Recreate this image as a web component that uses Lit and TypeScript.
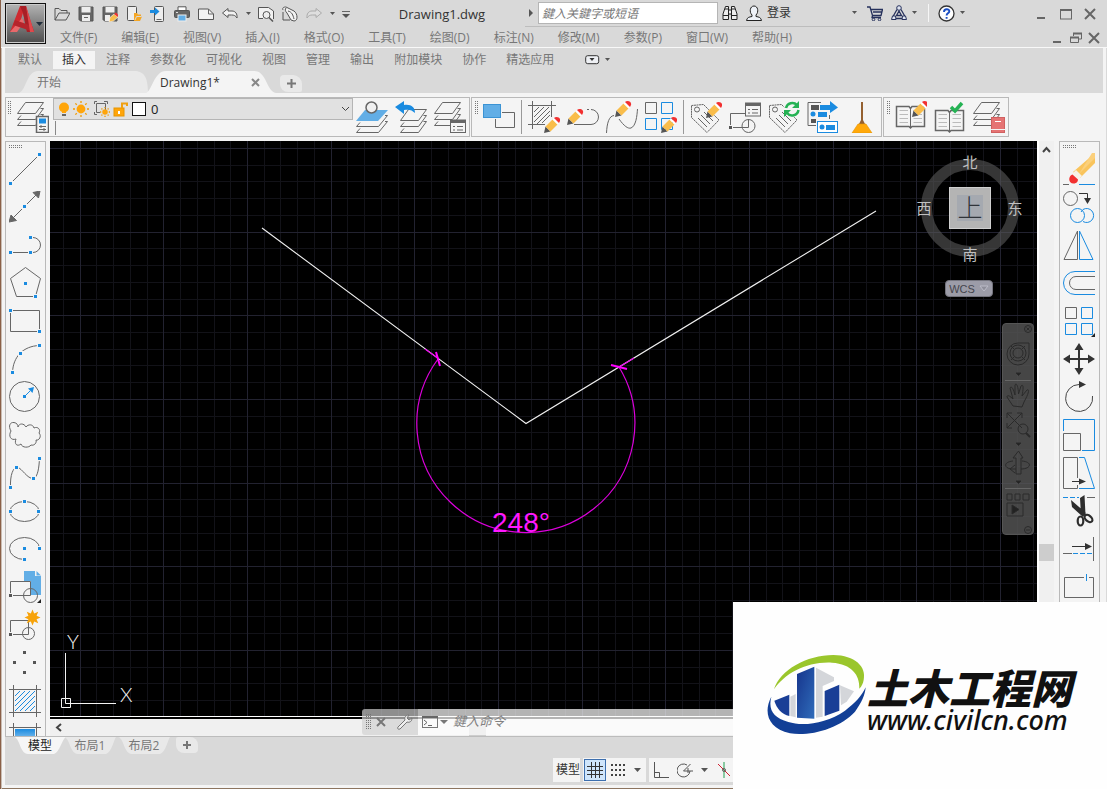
import { LitElement, html, svg, css } from "lit";
import { customElement, state } from "lit/decorators.js";
import { classMap } from "lit/directives/class-map.js";

const G = "#666";
const B = "#1a8be0";

const icon = (body: unknown, w = 32, h = 32) =>
  html`<svg class="ico" width=${w} height=${h} viewBox="0 0 ${w} ${h}" fill="none" stroke=${G} aria-hidden="true">${body}</svg>`;

/* Blue grip square centred on x, y */
const grip = (x: number, y: number, c = B) =>
  svg`<rect x=${x - 2.5} y=${y - 2.5} width="5" height="5" fill="#f4f4f4" stroke="none"/><rect x=${x - 1.5} y=${y - 1.5} width="3" height="3" fill=${c} stroke="none"/>`;

const caret = html`<svg class="ico" width="7" height="4" viewBox="0 0 7 4" aria-hidden="true"><path d="M1 0H6L3.5 3Z" fill="#555"/></svg>`;

const dots = (cols: number, rows: number) => html`<svg class="ico" width=${cols * 2} height=${rows * 2} aria-hidden="true">
  ${Array.from({ length: cols * rows }, (_, i) => svg`<rect x=${(i % cols) * 2} y=${Math.floor(i / cols) * 2} width="1" height="1" fill="#777"/>`)}
</svg>`;

/* Pencil with its tip at x, y, pointing down-left */
const pencil = (x: number, y: number) => svg`<g transform="translate(${x} ${y})" stroke="none">
  <path d="M0 0L1.5-6.5L6.5-1.5Z" fill="#555"/>
  <path d="M1.5-6.5L8.500-13.5L13.5-8.500L6.500-1.5Z" fill="#f9bd4b"/>
  <path d="M8.500-13.5L10-15L15-10L13.5-8.500Z" fill="#fff"/>
  <path d="M10-15C12-17 17-16 16-12L15-10Z" fill="#f23030"/>
</g>`;

/* Stack of three sheets */
const sheets = (top = "none") => svg`
  <path d="M8.500 1.5H26.500L18.500 12.500H.5Z" fill=${top} stroke=${G}/>
  <path d="M23.500 7.500H26.500L18.500 18.500H.5L4 14.500M23.500 13.500H26.500L18.500 24.500H.5L4 20.500"/>`;

const tag = svg`<path d="M1.500 4.500L13.500 3.500L29 19L17 31.500L1.500 16.500Z" stroke-dasharray="2 .5"/><circle cx="7" cy="8.500" r="2.500"/>
  <path d="M8 17L17 26M11 14L20 23M14 11L23 20" />`;

const book = svg`<path d="M1.500 7.500H14L15.500 9.500L17 7.500H29.500V27.500H17L15.500 29L14 27.500H1.500Z" stroke-width="1.500"/><path d="M15.500 9V28"/>
  <path d="M4.500 11.500H13M4.500 15.500H13M4.500 19.500H13M4.500 23.500H13M18.500 11.500H27M18.500 15.500H27M18.500 19.500H27M18.500 23.500H27" stroke="#bbb"/>`;

const star = (cx: number, cy: number, r: number) => {
  const pts = Array.from({ length: 16 }, (_, i) => {
    const q = i % 2 ? r * 0.55 : r;
    const a = (i * Math.PI) / 8;
    return `${(cx + q * Math.sin(a)).toFixed(1)},${(cy - q * Math.cos(a)).toFixed(1)}`;
  }).join(" ");
  return svg`<polygon points=${pts} fill="#f7a30a" stroke="none"/>`;
};

const sun = (cx: number, cy: number, r: number) => svg`<circle cx=${cx} cy=${cy} r=${r * 0.55} fill="#ffa50a" stroke="none"/>
  ${[0, 1, 2, 3, 4, 5, 6, 7].map((i) => {
    const a = (i * Math.PI) / 4;
    return svg`<line x1=${cx + r * 0.75 * Math.cos(a)} y1=${cy + r * 0.75 * Math.sin(a)} x2=${cx + r * Math.cos(a)} y2=${cy + r * Math.sin(a)} stroke="#f09a00" stroke-width="1.300"/>`;
  })}`;

const corner = svg`<path d="M32 28V32H28Z" fill="#222" stroke="none"/>`;

const quick: [string, unknown][] = [
  ["打开", svg`<path d="M1 14V2.500H5L7 4.500H13V7M1 14L5 7H16L12 14Z" stroke="#555"/>`],
  ["保存", svg`<path d="M1 1H15V15H2.500L1 13.500Z" fill="#666" stroke="#555"/><rect x="3.500" y="1" width="9" height="5.500" fill="#eee" stroke="none"/><rect x="4" y="9" width="8" height="6" fill="#eee" stroke="none"/><path d="M6 11.500H10" />`],
  ["另存为", svg`<path d="M1 1H15V15H2.500L1 13.500Z" fill="#666" stroke="#555"/><rect x="3.500" y="1" width="9" height="5.500" fill="#eee" stroke="none"/><rect x="3" y="9" width="5" height="6" fill="#eee" stroke="none"/><path d="M7 16L8 11.500L12 8L16 11L11.500 15Z" fill="#f9bd4b" stroke="#fff" stroke-width=".6"/><path d="M12 8L14 6.500L16.500 9L16 11Z" fill="#e33" stroke="none"/>`],
  ["从移动设备打开", svg`<rect x="1.500" y=".5" width="9" height="14" rx="1" fill="#eee" stroke="#555"/><path d="M8 15V7H11L12 8.500H15V10.500L16 10.500L14 15Z" fill="#f5a623" stroke="none"/><path d="M9 14L10.500 10.500H15.500" stroke="#d9d9d9"/>`],
  ["保存到移动设备", svg`<rect x="4.500" y=".5" width="9" height="15" rx="1" fill="#eee" stroke="#555"/><path d="M6.500 13.500H11.500" /><path d="M0 4H5V1.500L9.500 5.500L5 9.500V7H0Z" fill="#1a8be0" stroke="none"/>`],
  ["打印", svg`<path d="M4 4V.8H12V4" fill="#fff" stroke="#555"/><rect x=".5" y="4.500" width="15" height="7" rx="1" fill="#666" stroke="#555"/><rect x="4" y="9" width="8" height="6" fill="#62aee6" stroke="#eee"/><path d="M2 6.500H4" stroke="#ddd"/>`],
  ["新建", svg`<path d="M.5 3H10.500L15.500 8V13.500H.5Z" fill="#f2f2f2" stroke="#555"/><path d="M10.500 3V8H15.500"/>`],
  ["放弃", svg`<path d="M.5 7L6 2.500V5H10C13.500 5 15.500 8 15 12C13.500 9.500 12 9 9.500 9H6V11.500Z" fill="#f2f2f2" stroke="#555"/>`],
];

const quick2: [string, unknown][] = [
  ["打印预览", svg`<path d="M5 12.500H.5V1.500H10.500L15.500 5V13" fill="#f2f2f2" stroke="#555"/><circle cx="8.500" cy="9" r="3.500" fill="#eee" stroke="#555"/><path d="M11 11.500L15 15.500" stroke="#555" stroke-width="1.500"/>`],
  ["图纸集", svg`<path d="M1 4C0 1.500 2 1 4 1L12 5C16 8 16 15 12 15L9 14L5 7C3 5 3 3.500 4 2" fill="#f2f2f2" stroke="#555"/><path d="M1 6V14H8M6 5C10 6 11 9 12 13" stroke="#555"/>`],
  ["重做", svg`<path d="M15.500 7L10 2.500V5H6C2.500 5 .5 8 1 12C2.500 9.500 4 9 6.500 9H10V11.500Z" fill="#dedede" stroke="#aaa"/>`],
];

const draw: [string, unknown][] = [
  ["直线", svg`<path d="M3 29L29 3"/>${grip(1.5, 30.5)}${grip(30.5, 1.5)}`],
  ["构造线", svg`<path d="M4 27L27 4"/><path d="M0 31L2 24L7.500 29.500ZM31 0L24 1.500L29.500 7Z" fill="#666"/>${grip(15.5, 15.5)}`],
  ["多段线", svg`<path d="M1.500 23.500H21.500M21.500 8.500H24A7.500 7.500 0 0 1 24 23.500H21.500"/>${grip(1.5, 23.5)}${grip(21.5, 23.5)}${grip(21.5, 8.5)}`],
  ["多边形", svg`<path d="M16.500.5L31.500 11.500L26.500 29.500H7.500L1.500 11.500Z"/>${grip(16.5, 16.5)}${grip(26.5, 29.5)}`],
  ["矩形", svg`<path d="M1.500 5.500H30.500V26.500H1.500Z"/>${grip(1.5, 5.5)}${grip(30.5, 26.5)}`],
  ["圆弧", svg`<path d="M3.500 29.500C4 14 14 3 30.500 2.500"/>${grip(3.5, 29.5)}${grip(11.5, 10.5)}${grip(30.5, 2.5)}`],
  ["圆", svg`<circle cx="15.500" cy="15.500" r="15"/>${grip(15.5, 15.5)}<path d="M17 14L21 10" stroke=${B}/><path d="M25 6L23.500 12L19 7.500Z" fill=${B} stroke="none"/>`],
  ["修订云线", svg`<path d="M2 12C-1 7 1 3 5 3.500C8 4 9 6 9 8C10 4 15 4 17 8C19 5 24 5 25 9C29 7 32 11 30 14C33 17 30 22 27 21C28 24 25 27 22 26C20 29 13 29 12 25C8 28 5 25 7 20C2 22-1 17 2 12"/>`],
  ["样条曲线", svg`<path d="M1.500 30.500C1 18 4 10 8.500 10.500C13 11 18 22 24.500 21.500C29 20 30 10 30.500 1.500"/>${grip(1.5, 30.5)}${grip(7.5, 10.5)}${grip(24.5, 21.5)}${grip(30.5, 1.5)}`],
  ["椭圆", svg`<ellipse cx="15.500" cy="16.500" rx="14.500" ry="10"/>${grip(1.5, 16.5)}${grip(15.5, 6.5)}${grip(29.5, 16.5)}`],
  ["椭圆弧", svg`<path d="M30.500 15.500A15 11 0 1 0 15.500 26.500"/>${grip(30.5, 15.5)}${grip(15.5, 15.5)}${grip(15.5, 26.5)}`],
  ["插入块", svg`<path d="M15 0H26V5H32V24H22V10H15Z" fill="#62aee6" stroke="none"/><path d="M27.500 0L32 4.500H27.500Z" fill="#62aee6" stroke="none"/><path d="M1.500 10.500H21.500V24.500H1.500Z"/><circle cx="21.500" cy="24.500" r="7"/>${grip(1.5, 24.5, "#555")}${corner}`],
  ["创建块", svg`<path d="M1.500 11.500H19.500V25.500H1.500Z"/><circle cx="19.500" cy="24.500" r="6"/>${grip(1.5, 25.5, "#555")}${star(23.5, 8.5, 8)}`],
  ["点", svg`${grip(15.5, 5.5, "#555")}${grip(5.5, 15.5, "#555")}${grip(25.5, 15.5, "#555")}${grip(15.5, 25.5, "#555")}`],
  ["图案填充", svg`<path d="M0 4.500H32M0 27.500H32M4.500 0V32M27.500 0V32"/><path d="M6 11L11 6M6 16L16 6M6 21L21 6M6 26L26 6M11 26L26 11M16 26L26 16M21 26L26 21" stroke=${B}/>`],
  ["渐变色", svg`<defs><linearGradient id="gr" x1="0" y1="0" x2="0" y2="1"><stop offset="0" stop-color="#1a8be0"/><stop offset="1" stop-color="#e8f3fb"/></linearGradient></defs><rect x="6" y="6" width="20" height="20" fill="url(#gr)" stroke="none"/><path d="M0 4.500H32M4.500 0V32M27.500 0V32"/>`],
];

const modify: [string, unknown][] = [
  ["删除", svg`<path d="M32 0V10L17 25L10 19Z" fill="#f9c45c" stroke="none"/><path d="M29 0H32V5L16 21Z" fill="#fbd07c" stroke="none"/><path d="M13 17L10 20L15 27L19 23Z" fill="#f7f1e6" stroke="none"/><path d="M9.500 21.500C5 23 5 30.500 10.500 30.500C14 30.500 15 28 15 26.500Z" fill="#f23030" stroke="none"/><path d="M0 31.500H6"/><path d="M16 31.500H32" stroke=${B}/>`],
  ["复制", svg`<circle cx="7.500" cy="7.500" r="7"/><path d="M16 2.500H24.500V8" stroke="#333"/><path d="M21 7H28L24.500 13Z" fill="#333" stroke="none"/><g stroke=${B}><circle cx="14.500" cy="24.500" r="7"/><path d="M20 18.500A7 7 0 1 1 20 30.500M20 18.500L18 21"/></g>`],
  ["镜像", svg`<path d="M14.500 2V30.500H1Z"/><path d="M16.500 2V30.500H30Z" stroke=${B}/>`],
  ["偏移", svg`<path d="M32 4.500H12A11.500 11.500 0 0 0 12 27.500H32" stroke=${B}/><path d="M32 9.500H13A6.500 6.500 0 0 0 13 22.500H32"/>`],
  ["阵列", svg`<path d="M2.500 2.500H13.500V13.500H2.500Z"/><path d="M18.500 2.500H29.500V13.500H18.500ZM2.500 18.500H13.500V29.500H2.500ZM18.500 18.500H29.500V29.500H18.500Z" stroke=${B}/>${corner}`],
  ["移动", svg`<path d="M16 4V28M4 16H28" stroke="#333" stroke-width="2"/><path d="M16 0L20.500 7H11.500ZM16 32L20.500 25H11.500ZM0 16L7 11.500V20.500ZM32 16L25 11.500V20.500Z" fill="#333" stroke="none"/>`],
  ["旋转", svg`<path d="M29.500 15A13.500 13.500 0 1 1 16 3.500" stroke="#444"/><path d="M16 0L23 3.500L16 7Z" fill="#333" stroke="none"/>`],
  ["缩放", svg`<path d="M.5 12V.5H31.500V31.500H19" stroke=${B}/><path d="M.5 14.500H17.500V31.500H.5Z"/>`],
  ["拉伸", svg`<path d="M14.500 21V.5H.5V31.500H14.500V28"/><path d="M16 .5H21.500L31.500 31.500H16" stroke=${B}/><path d="M9 24.500H18" stroke="#333"/><path d="M16 21.500L23 24.500L16 27.500Z" fill="#333" stroke="none"/>`],
  ["修剪", svg`<path d="M0 2.500H16" stroke=${B} stroke-dasharray="5 2"/><path d="M24 2.500H32"/><path d="M17 3L21.500 0L22.500 20L18 20ZM8 5L23 18L20 22L9 12Z" fill="#2d2d2d" stroke="none"/><ellipse cx="17.500" cy="26" rx="2.800" ry="4.500" stroke="#2d2d2d" stroke-width="2.200"/><ellipse cx="25.500" cy="23.500" rx="2.800" ry="4.500" transform="rotate(-50 25.500 23.500)" stroke="#2d2d2d" stroke-width="2.200"/>`],
  ["延伸", svg`<path d="M9 13.500H24" stroke="#333"/><path d="M22 10L29 13.500L22 17Z" fill="#333" stroke="none"/><path d="M30.500 4V28M0 20.500H9"/><path d="M10 20.500H29" stroke=${B} stroke-dasharray="5 2"/>`],
  ["打断于点", svg`<path d="M21 6.500H1.500V26.500H30.500V6.500H26"/><path d="M23.500 3V10" stroke=${B}/>`],
];

const bar1: [string, unknown][] = [
  ["将对象的图层设为当前", svg`<path d="M9 9H32L22 20H0Z" fill="#62aee6" stroke="none"/><path d="M29 14.500H31.500L22.500 25.500H.5L4 21.500M29 20.500H31.500L22.500 31.500H.5L4 27.500"/><circle cx="15.500" cy="6.500" r="5.500" fill="#f0f0f0" stroke-width="1.500"/>`],
  ["上一个图层", svg`<g transform="translate(5 8)"><path d="M8.500.5H26.500L18.500 11.500H.5Z"/><path d="M23.500 6.500H26.500L18.500 17.500H.5L4 13.500M23.500 12.500H26.500L18.500 23.500H.5L4 19.500"/></g><path d="M0 6L9 0V4C16 3 20 6 20 12C17 9 14 8 9 9V13Z" fill=${B} stroke="none"/>`],
  ["图层状态管理器", svg`${sheets()}<rect x="16.500" y="19" width="15" height="12.500" fill="#f4f4f4"/><path d="M16 20.500H32" stroke-width="3"/><path d="M19 25.500H21M19 29H21M23 25.500H29M23 29H29"/>`],
];

const bar2: ([string, unknown] | null)[] = [
  ["插入", svg`<path d="M12.500 18V26.500H31.500V11.500H19"/><rect x=".5" y="3.500" width="17" height="13" fill="#62aee6" stroke="#3b93d4"/>`],
  null,
  ["编辑图案填充", svg`<path d="M0 4.500H28M0 23.500H17M4.500 0V28M23.500 0V16"/><path d="M6 11L11 6M6 16L16 6M6 21L21 6M9 23L22 10M14 22L22 14"/>${pencil(16, 32)}`],
  ["编辑多段线", svg`<path d="M7 23.500H24A7.500 7.500 0 0 0 24 8.500M20 8.500H22"/>${pencil(0, 24)}`],
  ["编辑样条曲线", svg`<path d="M.5 32C1 22 3 15 8 14.500M13 18C18 25 22 28 25 27C30 25 31 15 31.500 8"/>${pencil(9, 16)}`],
  ["编辑阵列", svg`<path d="M.5 1.500H11.500V12.500H.5Z"/><path d="M16.500 1.500H27.500V12.500H16.500ZM.5 17.500H11.500V28.500H.5ZM16.500 17.500H27.500V28.500H16.500Z" stroke=${B}/>${pencil(16, 32)}`],
  null,
  ["编辑属性", svg`${tag}${pencil(16, 17)}`],
  ["块属性管理器", svg`<path d="M17 12.500H1.500V26.500H19.500V18"/><circle cx="19.500" cy="25" r="6.500"/>${grip(1.5, 26.5, "#555")}<rect x="16.500" y="2" width="15" height="13" fill="#f4f4f4"/><path d="M16 3.500H32" stroke-width="3"/><path d="M19 8.500H21M19 12H21M23 8.500H29M23 12H29"/>`],
  ["同步属性", svg`${tag}<circle cx="24" cy="8" r="8" fill="#f4f4f4" stroke="none"/><path d="M18 7A6.500 6.500 0 0 1 29 4M30.500 9A6.500 6.500 0 0 1 19 12" stroke="#25b254" stroke-width="2.500"/><path d="M31 0V7H24ZM16 16V9H23Z" fill="#25b254" stroke="none"/>`],
  ["提取数据", svg`<path d="M14 1.500H1V24.500H9M22.500 14V18"/><rect x="4" y="4" width="8" height="5" fill="#555" stroke="none"/><rect x="4" y="18" width="5" height="4" fill="#555" stroke="none"/><circle cx="6" cy="13" r="2.500" fill=${B} stroke="none"/><rect x="11" y="11" width="9" height="5" fill=${B} stroke="none"/><path d="M13 4H23V0L31 6.500L23 12V9H13Z" fill=${B} stroke="none"/><rect x="10.500" y="20.500" width="20" height="11" fill="#fff" stroke=${B}/><circle cx="15" cy="26" r="2.500" fill=${B} stroke="none"/><rect x="19" y="24" width="9" height="5" fill=${B} stroke="none"/>`],
  ["清理", svg`<path d="M16 1V20" stroke="#946030" stroke-width="2"/><path d="M13 23L16 17L19 23Z" fill="#946030" stroke="none"/><path d="M12 23H20L26 32H6Z" fill="#ffa80a" stroke="#e59400" stroke-width=".6"/>`],
];

const bar3: [string, unknown][] = [
  ["编辑图纸集", svg`<g transform="translate(0 -2)">${book}</g>${pencil(17, 16)}`],
  ["检查标准", svg`<g transform="translate(0 2)">${book}</g><path d="M17 6L21 10L28 2" stroke="#25b254" stroke-width="3.500"/>`],
  ["图层转换器", svg`${sheets()}<rect x="18.500" y="16.500" width="13" height="15" fill="#e57373" stroke="#d06060"/><path d="M18 28.500H32" stroke="#f3f3f3"/><path d="M22 20.500H28" stroke="#fff"/>`],
];

const menus = ["文件(F)", "编辑(E)", "视图(V)", "插入(I)", "格式(O)", "工具(T)", "绘图(D)", "标注(N)", "修改(M)", "参数(P)", "窗口(W)", "帮助(H)"];
const ribbon = ["默认", "插入", "注释", "参数化", "可视化", "视图", "管理", "输出", "附加模块", "协作", "精选应用"];

const shared = css`
  :host { display: block; font: 12px/16px "Open Sans", "Noto Sans CJK SC", sans-serif; color: #666; }
  * { box-sizing: border-box; }
  button { font: inherit; color: inherit; background: none; border: 0; padding: 0; display: flex; align-items: center; justify-content: center; }
  .ico { display: block; flex: none; overflow: hidden; }
`;

@customElement("cad-header")
class CadHeader extends LitElement {
  static styles = [shared, css`
    .head { display: grid; grid-template-columns: 45px 1fr; background: #d9d9d9; border-bottom: 1px solid #f8f8f8; height: 48px; }
    .app { grid-row: 1 / 3; align-self: start; margin: 3px 0 0 4px; height: 41px; width: 41px; border: 1px solid #111; background: linear-gradient(#b4b4b4, #4c4c4c); box-shadow: inset 0 0 0 1px #ccc; }
    .top { display: flex; align-items: center; height: 27px; padding: 0 5px 0 4px; }
    .q { width: 24px; height: 24px; }
    .c { width: 12px; height: 24px; }
    .wide { width: 15px; }
    .title { flex: 1; text-align: center; font-size: 13px; line-height: 16px; color: #333; white-space: nowrap; margin-left: 6px; }
    .info { display: flex; align-items: center; width: 445px; height: 26px; border-bottom: 1px solid #bdbdbd; }
    .tri { margin: 0 6px 0 4px; }
    input { font: italic 12px/18px "Open Sans", "Noto Sans CJK SC", sans-serif; width: 180px; height: 22px; border: 1px solid #b5b5b5; background: #fff; padding: 0 3px; border-radius: 0; margin: 0 4px 0 -1px; }
    input::placeholder { color: #777; opacity: 1; }
    .login { color: #333; gap: 5px; margin-left: 8px; }
    .push { flex: 1; }
    .cart { margin: 0 4px 0 7px; }
    .sep { width: 1px; height: 18px; background: #f6f6f6; margin: 0 9px 0 10px; }
    .win { display: flex; margin-left: 60px; }
    .low { display: flex; align-items: center; justify-content: space-between; height: 20px; padding: 2px 4px 0 14px; }
    .menu { display: flex; gap: 24px; white-space: nowrap; color: #777; }
    .doc { display: flex; }
    .doc button { width: 18px; height: 18px; }
  `];
  render() {
    return html`<header class="head">
      <button class="app" aria-label="应用程序菜单">
        <svg class="ico" width="37" height="37" viewBox="0 0 37 37" aria-hidden="true">
          <path d="M3 27L13 1H19L27 27H20L16 8L10 27Z" fill="#cf2a30"/><path d="M13 1H19L24 27L20 27L16 8Z" fill="#a81f26"/>
          <path d="M3 27L15 13L17 17L10 27Z" fill="#e8696b"/><path d="M8 15L25 21L27 27L6 20Z" fill="#b5242b"/><path d="M19 1L27 27H23Z" fill="#e0484c"/>
          <path d="M29 17H36L32.500 21Z" fill="#222e3c"/>
        </svg>
      </button>
      <div class="top">
        ${quick.map(([n, b]) => html`<button class="q" aria-label=${n}>${icon(b, 16, 16)}</button>`)}
        <button class="c" aria-label="放弃列表">${caret}</button>
        ${quick2.map(([n, b]) => html`<button class="q" aria-label=${n}>${icon(b, 16, 16)}</button>`)}
        <button class="c" aria-label="重做列表">${caret}</button>
        <button class="wide" aria-label="自定义快速访问工具栏">${icon(svg`<path d="M1 1.500H9"/><path d="M1 4H9L5 8Z" fill="#555" stroke="none"/>`, 10, 8)}</button>
        <span class="title">Drawing1.dwg</span>
        <div class="info">
          <span class="tri">${icon(svg`<path d="M0 0L4 4L0 8Z" fill="#555" stroke="none"/>`, 4, 8)}</span>
          <input aria-label="搜索" placeholder="鍵入关鍵字或短语" />
          <button aria-label="查找">${icon(svg`<path d="M1 14.500V9L3.500 1.500H6.500V14.500ZM15 14.500V9L12.500 1.500H9.500V14.500ZM6.500 5H9.500V9H6.500M1 10.500H6.500M9.500 10.500H15M3 4H6.500M9.500 4H13" stroke="#222" fill="#eee"/>`, 16, 16)}</button>
          <button class="login">${icon(svg`<path d="M.5 15.500C1 12.500 3 12 6 11.500V10C3 7 4 1 8 1S13 7 10 10V11.500C13 12 15 12.500 15.500 15.500Z" stroke="#222" fill="#eef2f8"/>`, 16, 16)}登录</button>
          <span class="push"></span>
          <button class="c" aria-label="登录选项">${caret}</button>
          <button class="cart" aria-label="应用商店">${icon(svg`<path d="M0 2H3L5.500 10.500H14L15.500 4.500H4M5.500 10.500L5 12.500H14M6 7H15" stroke="#26315c" stroke-width="1.300"/><circle cx="6.500" cy="14.500" r="1.300" stroke="#26315c"/><circle cx="12.500" cy="14.500" r="1.300" stroke="#26315c"/>`, 16, 16)}</button>
          <button class="q" aria-label="保持连接">${icon(svg`<path d="M6 4.500L2 11.500M10 4.500L14 11.500M4 13.500H12M5.500 10.500L8 6L10.500 10.500Z" stroke="#26315c" stroke-width="1.300"/><circle cx="8" cy="3" r="2.300" fill="#dfe4f0" stroke="#26315c"/><path d="M1.500 11H4.500L5 14.500H.5ZM14.500 11H11.500L11 14.500H15.500Z" fill="#dfe4f0" stroke="#26315c"/>`, 16, 16)}</button>
          <button aria-label="连接选项">${caret}</button>
          <span class="sep"></span>
          <button aria-label="帮助"><svg class="ico" width="17" height="17" viewBox="0 0 17 17"><circle cx="8.500" cy="8.500" r="7.500" fill="#fff" stroke="#333" stroke-width="1.300"/><path d="M6 7C6 3.500 11.500 3.500 11.300 6.500C11 8.500 8.600 8.300 8.600 10.500M8.600 12V13.800" fill="none" stroke="#1c4fc4" stroke-width="1.900"/></svg></button>
          <button class="wide" aria-label="帮助选项">${caret}</button>
        </div>
        <div class="win">
          <button class="q" aria-label="最小化">${icon(svg`<path d="M3 12H11" stroke-width="2"/>`, 16, 16)}</button>
          <button class="q" aria-label="最大化">${icon(svg`<rect x="2.500" y="3.500" width="11" height="9.500"/><path d="M2 4H14" stroke-width="2"/>`, 16, 16)}</button>
          <button class="q" aria-label="关闭">${icon(svg`<path d="M3 3L13 13M13 3L3 13" stroke-width="2"/>`, 16, 16)}</button>
        </div>
      </div>
      <div class="low">
        <nav class="menu">${menus.map((m) => html`<button>${m}</button>`)}</nav>
        <div class="doc">
          <button aria-label="最小化图形">${icon(svg`<path d="M1 10H9" stroke-width="2"/>`, 12, 12)}</button>
          <button aria-label="还原图形">${icon(svg`<path d="M3.500 4V1.500H11.500V7H8.500" /><path d="M3 1.500H12M0 5.500H9" stroke-width="2"/><path d="M.5 5V10.500H8.500V5"/>`, 12, 12)}</button>
          <button aria-label="关闭图形">${icon(svg`<path d="M1 1L11 11M11 1L1 11" stroke-width="2"/>`, 12, 12)}</button>
        </div>
      </div>
    </header>`;
  }
}

@customElement("cad-ribbon")
class CadRibbon extends LitElement {
  @state() private active = "插入";
  static styles = [shared, css`
    .wrap { margin: 0 4px 0 5px; background: #d9d9d9; height: 45px; }
    .tabs { display: flex; align-items: center; gap: 2px; height: 23px; padding-left: 4px; }
    .tab { height: 18px; padding: 0 9px; color: #777; white-space: nowrap; }
    .tab.on { background: #f4f4f4; color: #333; }
    .more { margin-left: 20px; gap: 4px; }
    .files { display: flex; height: 22px; padding-left: 13px; }
    .file { height: 22px; width: 130px; background: #e9e9e9; color: #777; justify-content: flex-start; clip-path: path("M0 22C8 22 8 0 20 0H116C126 0 130 6 130 22Z"); padding: 1px 0 0 19px; }
    .file.on { background: #f4f4f4; color: #333; padding: 1px 16px 0 14px; justify-content: space-between; clip-path: path("M0 22C6 20 8 0 20 0H108C121 0 120 20 130 22Z"); margin-left: -2px; }
    .add { width: 22px; height: 17px; margin: 4px 0 0 4px; background: #e9e9e9; border-radius: 4px 9px 2px 8px; }
  `];
  render() {
    return html`<div class="wrap">
      <nav class="tabs">
        ${ribbon.map((t) => html`<button class=${classMap({ tab: true, on: t === this.active })} @click=${() => (this.active = t)}>${t}</button>`)}
        <button class="more" aria-label="最小化功能区">${icon(svg`<rect x=".7" y=".7" width="13" height="8" rx="2" fill="#eef0f4" stroke="#333"/><path d="M4.500 3H9.500L7 6Z" fill="#333" stroke="none"/>`, 15, 10)}${caret}</button>
      </nav>
      <div class="files">
        <button class="file">开始</button>
        <button class="file on">Drawing1*${icon(svg`<path d="M1 1L8 8M8 1L1 8" stroke-width="2" stroke="#888"/>`, 9, 9)}</button>
        <button class="add" aria-label="新图形">${icon(svg`<path d="M4.500 0V9M0 4.500H9" stroke-width="2" stroke="#777"/>`, 9, 9)}</button>
      </div>
    </div>`;
  }
}

@customElement("cad-toolbars")
class CadToolbars extends LitElement {
  static styles = [shared, css`
    .row { display: flex; gap: 1px; padding: 4px 0 4px 5px; }
    .bar { display: flex; align-items: center; gap: 7px; height: 40px; border: 1px solid #b9b9b9; padding: 0 3px; background: #f4f4f4; }
    .grab { align-self: flex-start; margin: 3px -3px 0 0; }
    .bar.a { padding-left: 2px; }
    .a .grab { margin-right: -2px; }
    .sep { width: 1px; height: 34px; background: #999; margin: 0 -1px; }
    .field { align-self: flex-start; margin: 0 -4px 0 -3px; }
    .combo { display: flex; align-items: center; width: 300px; height: 22px; border: 1px solid #b5b5b5; background: #e1e1e1; padding: 0 2px; gap: 3px; }
    .combo select { appearance: none; flex: 1; border: 0; background: none; font: 13px/18px "Open Sans", sans-serif; color: #222; padding: 0; margin-left: 2px; }
    .stem { width: 1px; height: 14px; background: #888; margin: 1px 0 0 2px; }
  `];
  private btn([n, b]: [string, unknown]) {
    return html`<button aria-label=${n} title=${n}>${icon(b)}</button>`;
  }
  render() {
    return html`<div class="row">
      <div class="bar a">
        <span class="grab">${dots(2, 7)}</span>
        ${this.btn(["图层特性", svg`${sheets()}<rect x="19.500" y="15.500" width="12" height="16" fill="#f4f4f4" stroke-width="1.500"/><rect x="22" y="17.500" width="7" height="5" fill=${B} stroke="none"/><path d="M22 25.500H29M22 28.500H29M24 24V27M27 27V30"/>`])}
        <div class="field">
          <div class="combo">
            ${icon(svg`<circle cx="8" cy="6.500" r="5" fill="#ffa50a" stroke="none"/><path d="M6 10H10V12H6Z" fill="#ffa50a" stroke="none"/><path d="M6 14H10" stroke-width="2"/>`, 14, 16)}
            ${icon(svg`${sun(8, 8, 8)}`, 16, 16)}
            ${icon(svg`<path d="M4.500 3.500H13.500V10M4.500 3.500V12.500H8M2.500 4V1.500H5M12 1.500H15.500V4M2.500 12V14.500H5"/>${sun(13, 12, 5)}`, 18, 18)}
            ${icon(svg`<rect x="1" y="7" width="10" height="8" fill="#ffa50a" stroke="#e89500"/><path d="M9 7V2.500H14V5" stroke="#f0a010" stroke-width="2"/><path d="M6 10V13" stroke="#fff" stroke-width="2"/>`, 16, 16)}
            ${icon(svg`<rect x=".5" y=".5" width="13" height="13" fill="#fff" stroke="#111"/>`, 14, 14)}
            <select aria-label="图层"><option>0</option></select>
            ${icon(svg`<path d="M1 1L4.500 4.500L8 1" stroke="#444"/>`, 9, 6)}
          </div>
          <div class="stem"></div>
        </div>
        ${bar1.map((t) => this.btn(t))}
      </div>
      <div class="bar"><span class="grab">${dots(2, 7)}</span>${bar2.map((t) => (t ? this.btn(t) : html`<span class="sep"></span>`))}</div>
      <div class="bar"><span class="grab">${dots(2, 7)}</span>${bar3.map((t) => this.btn(t))}</div>
    </div>`;
  }
}

@customElement("cad-palette")
class CadPalette extends LitElement {
  static properties = { tools: { attribute: false } };
  declare tools: [string, unknown][];
  static styles = [shared, css`
    :host { height: 100%; overflow: hidden; }
    .pal { height: 100%; width: 41px; border: 1px solid #b9b9b9; border-bottom: 0; padding: 3px; display: flex; flex-direction: column; gap: 6px; overflow: hidden; background: #f4f4f4; }
    .grab { height: 2px; flex: none; }
    button { flex: none; width: 32px; }
  `];
  render() {
    return html`<div class="pal"><span class="grab">${dots(7, 2)}</span>
      ${this.tools.map(([n, b]) => html`<button aria-label=${n} title=${n}>${icon(b)}</button>`)}</div>`;
  }
}

@customElement("cad-canvas")
class CadCanvas extends LitElement {
  static styles = [shared, css`
    :host { height: 100%; }
    .space { position: relative; height: 100%; background: #000; overflow: hidden; border-bottom: 2px solid #000; }
    .model { display: block; width: 100%; height: 100%; border-bottom: 1px solid #fff; }
    .ucs { position: absolute; left: 8px; bottom: 0; }
    .cube { position: absolute; right: 12px; top: 12px; }
    .wcs { position: absolute; right: 44px; top: 139px; width: 48px; height: 17px; border: 1px solid #74747e; border-radius: 4px; background: #9c9ca8; color: #44444c; font: 11px/14px "Liberation Sans", sans-serif; gap: 4px; }
    .nav { position: absolute; right: 3px; top: 182px; width: 32px; height: 212px; border-radius: 4px; background: rgba(88, 88, 88, 0.8); border: 1px solid #555; }
    .dim { font-family: "Liberation Sans", sans-serif; font-size: 28px; }
    .axis { font-family: Lato, sans-serif; font-weight: 300; font-size: 20px; }
    .dir { font-family: "Noto Sans CJK SC", sans-serif; font-size: 15px; }
    .face { font-family: "Noto Sans CJK SC", sans-serif; font-size: 25px; font-weight: 300; }
  `];
  render() {
    const step = 16.73;
    const col = (i: number) => Math.round(13 + i * step);
    const row = (i: number) => Math.round(7 + i * step);
    /* Every fifth grid line is brighter; x majors start at the second column */
    const cols = Array.from({ length: 120 }, (_, i) => i);
    const rows = Array.from({ length: 80 }, (_, i) => i);
    const v = (i: number, c: string) => svg`<rect x=${col(i)} y="0" width="1" height="100%" fill=${c}/>`;
    const h = (i: number, c: string) => svg`<rect x="0" y=${row(i)} width="100%" height="1" fill=${c}/>`;
    return html`<div class="space">
      <svg class="model" aria-label="图形">
        <g shape-rendering="crispEdges">
          ${cols.filter((i) => i % 5 !== 1).map((i) => v(i, "#121218"))}
          ${rows.filter((i) => i % 5 !== 0).map((i) => h(i, "#121218"))}
          ${cols.filter((i) => i % 5 === 1).map((i) => v(i, "#222230"))}
          ${rows.filter((i) => i % 5 === 0).map((i) => h(i, "#222230"))}
        </g>
        <path d="M212 87L476 282.500L826 70" fill="none" stroke="#f0f0f0" stroke-width="1.100"/>
        <path d="M388 218A109 109 0 1 0 569 226" fill="none" stroke="#dd00dd" stroke-width="1.200"/>
        <path d="M375 208L389 218M569 226L584 217" fill="none" stroke="#e0e" stroke-width="1.200"/>
        <path d="M386 211L390 225M561 224L577 228" fill="none" stroke="#f0f" stroke-width="2"/>
        <text class="dim" x="442" y="391" fill="#ff18ff">248°</text>
      </svg>
      <svg class="ucs" width="84" height="96" viewBox="0 0 84 96" fill="none" stroke="#f4f4f4">
        <path d="M7.500 32V82.500H58M3.500 77.500H12.500V86.500H3.500Z"/>
        <text class="axis" x="9" y="28" fill="#f4f4f4" stroke="none">Y</text>
        <text class="axis" x="62" y="81" fill="#f4f4f4" stroke="none">X</text>
      </svg>
      <svg class="cube" width="112" height="112" viewBox="0 0 112 112" text-anchor="middle">
        <circle cx="57" cy="55" r="43.500" fill="none" stroke="#5a5a5a" stroke-opacity=".6" stroke-width="11"/>
        <rect x="36.500" y="34.500" width="41" height="41" fill="#b4b4b4" stroke="#d0d0d0"/>
        <rect x="44" y="42" width="26" height="26" fill="#a5a9b0"/>
        <text class="face" x="57" y="64" fill="#30343a">上</text>
        <g class="dir" fill="#c0c0c0"><text x="57" y="15">北</text><text x="57" y="107">南</text><text x="11" y="61">西</text><text x="102" y="61">东</text></g>
      </svg>
      <button class="wcs">WCS ${icon(svg`<path d="M1 1H9L5 6Z" stroke="#bcbcc8" fill="#8e8e9a"/>`, 10, 8)}</button>
      <div class="nav" role="toolbar" aria-label="导航栏">
        <svg class="ico" width="30" height="210" viewBox="0 0 30 210" fill="none" stroke="#2a2a2a">
          <circle cx="25" cy="5" r="3.500"/><path d="M23.500 3.500L26.500 6.500M26.500 3.500L23.500 6.500"/>
          <path d="M15 19H26V30A11 11 0 1 1 15 19Z"/><circle cx="15" cy="29" r="8"/><circle cx="15" cy="29" r="5"/><path d="M11 25L8 22M19 25L22 22M11 33L8 36M19 33L22 36"/>
          <path d="M13 49H18L15.500 51.500ZM13 119H18L15.500 121.500ZM13 157H18L15.500 159.500Z" fill="#222"/>
          <path d="M2 56.500H28M2 164.500H28" stroke="#666"/>
          <path d="M10 82L4 73C4 71 6 71 10 75L7 64C8 62 10 63 12 71V61C13 59 15 60 15.500 70L18 62C20 60 21 62 19 72L24 66C26 65 27 67 21 78L19 83Z"/>
          <path d="M4 89L19 104M19 89L4 104M4 94V89H9M14 89H19V94M4 99V104H9"/><circle cx="20" cy="105" r="5"/><path d="M23 109L27 113" stroke-width="2"/>
          <path d="M13 150V134H10L15.500 127L20 134H18V150Z"/><path d="M10 137C0 138 1 144 8 145H13M19 137C30 138 28 145 18 145M12 141L7 145L12 149"/>
          <path d="M4 170H9V176H4ZM12 170H17V176H12ZM20 170H26V176H20ZM4 179H20V192H4Z"/><path d="M9 181L16 185.500L9 190Z" fill="#222"/>
          <circle cx="25" cy="206" r="3.500"/><path d="M23 206H27"/>
        </svg>
      </div>
    </div>`;
  }
}

@customElement("cad-footer")
class CadFooter extends LitElement {
  static styles = [shared, css`
    .foot { background: #d9d9d9; border-top: 1px solid #bcbcbc; margin: 0 4px 0 5px; height: 49px; }
    .tabs { display: flex; height: 17px; padding-left: 9px; }
    .tab { height: 17px; width: 52px; background: #e9e9e9; color: #777; clip-path: path("M0 0C6 1 6 17 14 17H42C48 15 50 2 52 0Z"); margin-right: 2px; }
    .tab.on { background: #f6f6f6; color: #222; clip-path: path("M0 0C6 1 6 17 14 17H40C46 15 48 2 52 0Z"); margin: 0 -2px 0 0; }
    .add { width: 22px; height: 16px; background: #e9e9e9; border-radius: 2px 8px 4px 8px; margin-left: 4px; }
    .status { display: flex; gap: 3px; padding: 4px 0 0 548px; }
    .grp { display: flex; align-items: center; height: 24px; background: #f4f4f4; color: #333; }
    .grp.m { width: 27px; justify-content: flex-end; white-space: nowrap; }
    .grp.g { width: 63px; }
    .grp.s { flex: 1; }
    .on-g { width: 22px; height: 22px; border: 1px solid #3d6fae; background: #cfe5fb; margin-left: 1px; }
    .w { width: 24px; height: 22px; }
    .c { width: 15px; height: 22px; }
  `];
  render() {
    const d = [0, 1, 2, 3];
    return html`<footer class="foot">
      <div class="tabs">
        <button class="tab on">模型</button><button class="tab">布局1</button><button class="tab">布局2</button>
        <button class="add" aria-label="新建布局">${icon(svg`<path d="M4 0V8M0 4H8" stroke="#777" stroke-width="2"/>`, 8, 8)}</button>
      </div>
      <div class="status">
        <div class="grp m"><button>模型</button></div>
        <div class="grp g">
          <button class="on-g" aria-label="栅格">${icon(svg`<path d="M4.500 0V16M8.500 0V16M12.500 0V16M0 4.500H16M0 8.500H16M0 12.500H16" stroke="#333"/>`, 16, 16)}</button>
          <button class="w" aria-label="捕捉">${icon(svg`${d.flatMap((x) => d.slice(0, 3).map((y) => svg`<rect x=${x * 4} y=${y * 5} width="2" height="2" fill="#444" stroke="none"/>`))}`, 14, 12)}</button>
          <button class="c" aria-label="捕捉设置">${icon(svg`<path d="M0 0H7L3.500 4Z" fill="#555" stroke="none"/>`, 7, 4)}</button>
        </div>
        <div class="grp s">
          <button class="w" aria-label="正交">${icon(svg`<path d="M1.500 0V15.500H16M1.500 10.500H6.500V15.500" stroke="#555"/>`, 16, 16)}</button>
          <button class="w" aria-label="极轴追踪">${icon(svg`<path d="M13 9A6.500 6.500 0 1 1 10 3M6.500 9L13.500 2M6.500 9H16M11 6V11" stroke="#555"/>`, 16, 16)}</button>
          <button class="c" aria-label="极轴设置">${icon(svg`<path d="M0 0H7L3.500 4Z" fill="#555" stroke="none"/>`, 7, 4)}</button>
          <button class="w" aria-label="等轴测草图">${icon(svg`<path d="M2 2L14 14" stroke="#d02030"/><path d="M8 0V16" stroke="#20a050"/><circle cx="8" cy="8" r="1.500"/>`, 16, 16)}</button>
        </div>
      </div>
    </footer>`;
  }
}

@customElement("site-mark")
class SiteMark extends LitElement {
  static styles = [shared, css`
    .mark { background: #fefefe; width: 374px; height: 187px; display: flex; align-items: center; padding: 0 0 4px 32px; }
    .words { display: flex; flex-direction: column; margin: 10px 0 0; color: #111; white-space: nowrap; }
    .zh { font: italic 900 41px/42px "Noto Sans CJK SC", sans-serif; }
    .url { font: italic 500 27px/26px "Noto Sans", sans-serif; }
  `];
  render() {
    return html`<div class="mark">
      <svg class="ico" width="102" height="82" viewBox="105 159 306 246" aria-hidden="true">
        <defs><linearGradient id="bl" x1="0" x2="1" y1="0" y2="1"><stop offset="0" stop-color="#16348c"/><stop offset="1" stop-color="#2f6cba"/></linearGradient></defs>
        <path d="M132 268C150 210 230 165 310 165C375 166 410 200 401 240C399 250 396 258 388 266C390 225 365 192 306 188C230 184 165 220 132 268Z" fill="#9ac62c"/>
        <path d="M124 290C100 335 112 385 180 400C240 410 330 385 375 335C395 308 405 285 407 262C395 288 375 310 345 332C290 370 220 380 175 366C130 352 114 330 124 290Z" fill="#123f96"/>
        <path d="M258 203L312 232V243L278 258V350L258 353Z" fill="#d4d6da"/><path d="M330 256L372 274L350 305L333 316Z" fill="#d4d6da"/>
        <path d="M181 290L197 282V352L181 348Z" fill="#d4d6da"/>
        <path d="M201 222L253 200V356L201 353Z" fill="url(#bl)"/><path d="M284 273L328 254V332L284 348Z" fill="#193e96"/><path d="M133 302L178 284V348C155 343 140 325 133 302Z" fill="#193e96"/>
      </svg>
      <div class="words"><span class="zh">土木工程网</span><span class="url">www.civilcn.com</span></div>
    </div>`;
  }
}

@customElement("app-root")
class AppRoot extends LitElement {
  static styles = [shared, css`
    :host { position: relative; overflow: hidden; height: 100vh; }
    .page { height: 100vh; display: flex; flex-direction: column; background: #f4f4f4; box-shadow: inset 1px 0 0 #8a6048, inset 2px 0 0 #c9bcb2, inset -1px 0 0 #d9d9d9, inset 0 -1px 0 #8d7560; padding-bottom: 4px; }
    cad-header { margin-left: 1px; }
    .main { position: relative; flex: 1; min-height: 0; display: grid; grid-template-columns: 41px 1fr 17px 46px; padding: 0 7px 0 5px; }
    .work { margin-left: 4px; display: grid; grid-template-rows: 1fr 17px; min-height: 0; min-width: 0; }
    .hs { background: #f0f0f0; display: flex; align-items: center; }
    .hs button { width: 17px; }
    .hthumb { width: 17px; height: 16px; background: #cdcdcd; margin-left: 402px; }
    .vs { background: #f0f0f0; border-left: 2px solid #fff; display: flex; flex-direction: column; }
    .vs button { height: 18px; width: 15px; }
    .vthumb { height: 17px; background: #cdcdcd; margin-top: 385px; }
    .right { margin-left: 5px; width: 41px; min-height: 0; }
    .cmd { position: absolute; left: 362px; right: 60px; bottom: 1px; height: 26px; display: flex; border-radius: 3px; overflow: hidden; }
    .ctl { width: 56px; background: rgba(210, 210, 210, 0.68); display: flex; align-items: center; padding-left: 4px; gap: 4px; }
    .ctl button:last-child { margin-left: 7px; }
    .line { flex: 1; background: rgba(254, 254, 254, 0.71); display: flex; align-items: center; padding-left: 4px; gap: 2px; }
    .line input { flex: 1; border: 0; background: none; font: italic 13px/18px "Noto Sans CJK SC", sans-serif; padding: 0 0 2px; margin-left: 3px; outline: 0; }
    .line input::placeholder { color: #808080; opacity: 1; }
    site-mark { position: absolute; right: 0; bottom: 0; }
  `];
  render() {
    return html`<div class="page">
      <cad-header></cad-header>
      <cad-ribbon></cad-ribbon>
      <cad-toolbars></cad-toolbars>
      <div class="main">
        <cad-palette .tools=${draw}></cad-palette>
        <div class="work">
          <cad-canvas></cad-canvas>
          <div class="hs"><button aria-label="向左滚动">${icon(svg`<path d="M6 1L2 4.500L6 8" stroke="#444" stroke-width="2"/>`, 8, 9)}</button><span class="hthumb"></span></div>
        </div>
        <div class="vs"><button aria-label="向上滚动">${icon(svg`<path d="M1 6L4.500 2L8 6" stroke="#444" stroke-width="2"/>`, 9, 8)}</button><span class="vthumb"></span></div>
        <cad-palette class="right" .tools=${modify}></cad-palette>
        <div class="cmd">
          <div class="ctl">
            ${dots(3, 8)}
            <button aria-label="关闭命令行">${icon(svg`<path d="M1 1L9 9M9 1L1 9" stroke="#777" stroke-width="2"/>`, 10, 10)}</button>
            <button aria-label="自定义">${icon(svg`<path d="M1 13L8 6C7 3 9 1 12 1L10 4L12 6L15 4C15 7 13 9 10 8L3 15C1 16 0 14 1 13Z" fill="#eee" stroke="#777"/>`, 16, 16)}</button>
          </div>
          <div class="line">
            ${icon(svg`<rect x=".5" y=".5" width="15" height="11" stroke="#777"/><path d="M0 1H16" stroke-width="2"/><path d="M2 4L5 6.500L2 9M6 9.500H10"/>`, 16, 12)}
            ${icon(svg`<path d="M0 1H8L4 5Z" fill="#777" stroke="none"/>`, 8, 6)}
            <input aria-label="命令" placeholder="鍵入命令" />
          </div>
        </div>
      </div>
      <cad-footer></cad-footer>
      <site-mark></site-mark>
    </div>`;
  }
}
